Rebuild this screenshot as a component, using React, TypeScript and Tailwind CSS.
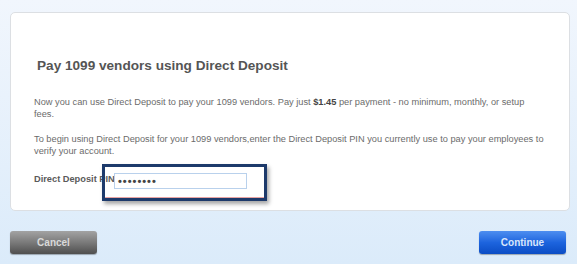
export default function App() {
  return (
    <main
      className="w-[577px] h-[264px] bg-gradient-to-b from-[#f1f6fd] to-[#dbebfa] pt-[12px] px-[10px] pr-[7px]"
      style={{ fontFamily: '"Liberation Sans", Arial, sans-serif' }}
    >
      <div className="h-[199px] bg-white border border-[#dcdfe3] rounded-[5px] pl-[23px] pr-[6px] pt-[44px]">
        <h1 className="ml-[3px] text-[13.6px] font-bold text-[#555] leading-[17px]">
          Pay 1099 vendors using Direct Deposit
        </h1>

        <p className="mt-[23px] text-[9.25px] leading-[11.5px] text-[#6b6b6b]">
          Now you can use Direct Deposit to pay your 1099 vendors. Pay just{' '}
          <span className="font-bold text-[#444]">$1.45</span> per payment - no minimum, monthly, or setup
          <br />
          fees.
        </p>

        <p className="mt-[14px] text-[9.25px] leading-[11.5px] text-[#6b6b6b]">
          To begin using Direct Deposit for your 1099 vendors,enter the Direct Deposit PIN you currently use to pay
          your employees to
          <br />
          verify your account.
        </p>

        <div className="mt-[16px] flex items-start">
          <span className="text-[9.25px] font-bold text-[#5a5a5a] leading-[12px] w-[80px] whitespace-nowrap">
            Direct Deposit PIN
          </span>
          <div className="relative">
            <div className="w-[133px] h-[16px] border border-[#b9d1ec] bg-white flex items-center pl-[3px] text-[11px] font-bold text-[#444] tracking-[1px]">
              ••••••••
            </div>
            <div className="absolute -left-[12px] -top-[9px] w-[165px] h-[37px] border-[3px] border-[#1d3a6b] shadow-[2px_3px_4px_rgba(0,0,0,0.35)]">
              <div className="absolute bottom-0 left-0 right-0 h-px bg-[#e9a3a3]" />
            </div>
          </div>
        </div>
      </div>

      <div className="mt-[20px] flex justify-between pr-[4px]">
        <button className="w-[87px] h-[23px] rounded-[3px] bg-gradient-to-b from-[#a3a3a3] via-[#7a7a7a] to-[#4f4f4f] text-[10px] font-bold text-[#d9d9d9] shadow-[0_1px_1px_rgba(0,0,0,0.3)]">
          Cancel
        </button>
        <button className="w-[87px] h-[23px] rounded-[3px] bg-gradient-to-b from-[#4d8ef0] via-[#1d64de] to-[#0a4cc4] text-[10px] font-bold text-[#d8e6fb] shadow-[0_1px_1px_rgba(0,0,0,0.3)]">
          Continue
        </button>
      </div>
    </main>
  );
}
